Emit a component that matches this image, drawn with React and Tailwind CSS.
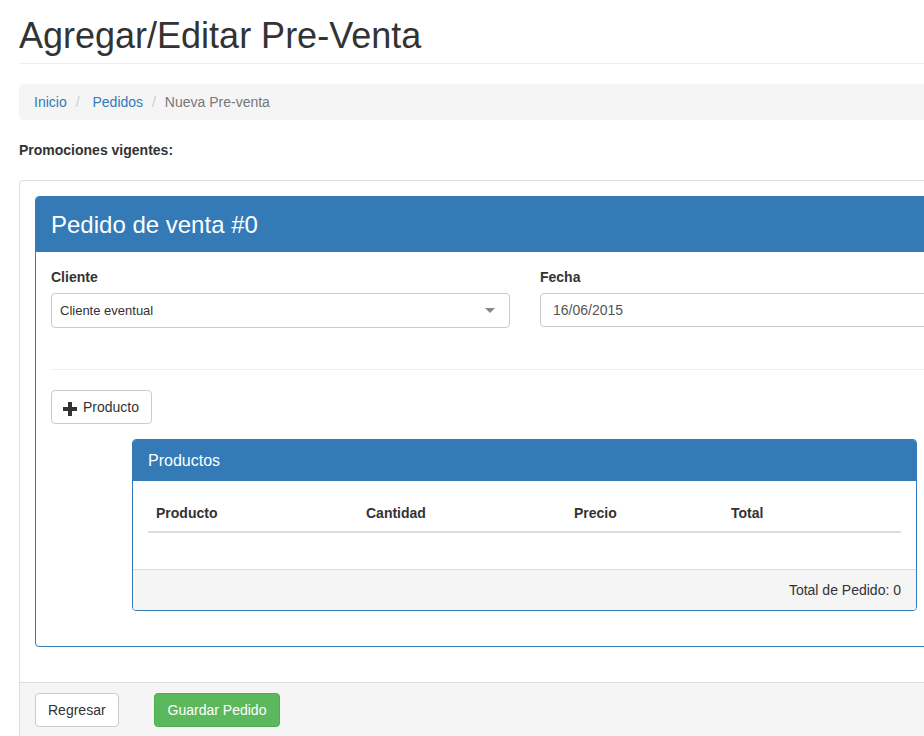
export default function App() {
  return (
    <div className="w-[924px] h-[736px] overflow-hidden bg-white font-['Liberation_Sans',Arial,sans-serif] text-[14px] leading-[20px] text-[#333]">
      <div className="pl-[19px] w-[1050px]">
        <div className="pt-[16px] pb-[7px] border-b border-[#eee]">
          <h1 className="text-[36px] leading-[40px] text-[#333]">Agregar/Editar Pre-Venta</h1>
        </div>
        <div className="mt-[20px] h-[36px] bg-[#f5f5f5] rounded-[4px] px-[15px] flex items-center">
          <span className="text-[#337ab7]">Inicio</span>
          <span className="text-[#ccc] ml-[4px] pl-[5px] pr-[9px]">/{"\u00a0"}</span>
          <span className="text-[#337ab7]">Pedidos</span>
          <span className="text-[#ccc] ml-[4px] px-[5px]">/{"\u00a0"}</span>
          <span className="text-[#777]">Nueva Pre-venta</span>
        </div>
        <div className="mt-[20px] font-bold h-[20px]">Promociones vigentes:</div>
        <div className="mt-[20px] border border-[#ddd] rounded-[4px]">
          <div className="p-[15px]">
            <div className="border border-[#337ab7] rounded-[4px] mb-[20px]">
              <div className="h-[55px] bg-[#337ab7] rounded-t-[3px] px-[15px] flex items-center text-white text-[24px]">
                Pedido de venta #0
              </div>
              <div className="p-[15px]">
                <div className="flex gap-[30px]">
                  <div className="w-[459px]">
                    <div className="font-bold h-[20px] mb-[6px]">Cliente</div>
                    <div className="h-[35px] border border-[#ccc] rounded-[4px] flex items-center justify-between pl-[8px] pr-[14px] text-[13px]">
                      <span>Cliente eventual</span>
                      <svg width="10" height="6" viewBox="0 0 10 6"><path d="M0 0 L10 0 L5 5 Z" fill="#888" /></svg>
                    </div>
                  </div>
                  <div className="w-[459px]">
                    <div className="font-bold h-[20px] mb-[6px]">Fecha</div>
                    <div className="h-[34px] border border-[#ccc] rounded-[4px] flex items-center px-[12px] text-[#555]">
                      16/06/2015
                    </div>
                  </div>
                </div>
                <div className="mt-[41px] border-t border-[#eee]" />
                <div className="mt-[20px]">
                  <button className="h-[34px] border border-[#ccc] rounded-[4px] pl-[11px] pr-[12px] flex items-center bg-white text-[#333]">
                    <svg width="14" height="14" viewBox="0 0 14 14" className="mr-[6px] mt-[3px]">
                      <rect x="5" y="0" width="4" height="14" fill="#333" />
                      <rect x="0" y="5" width="14" height="4" fill="#333" />
                    </svg>
                    Producto
                  </button>
                </div>
                <div className="mt-[15px] ml-[81px] w-[785px] border border-[#337ab7] rounded-[4px] mb-[20px]">
                  <div className="h-[41px] bg-[#337ab7] rounded-t-[3px] px-[15px] flex items-center text-white text-[16px]">
                    Productos
                  </div>
                  <div className="px-[15px] pt-[14px] pb-[15px]">
                    <div className="flex font-bold border-b-2 border-[#ddd] mb-[21px]">
                      <div className="w-[210px] p-[8px]">Producto</div>
                      <div className="w-[208px] p-[8px]">Cantidad</div>
                      <div className="w-[157px] p-[8px]">Precio</div>
                      <div className="w-[178px] p-[8px]">Total</div>
                    </div>
                  </div>
                  <div className="border-t border-[#ddd] bg-[#f5f5f5] px-[15px] py-[10px] text-right rounded-b-[3px]">
                    Total de Pedido: 0
                  </div>
                </div>
              </div>
            </div>
          </div>
          <div className="border-t border-[#ddd] bg-[#f5f5f5] px-[15px] py-[10px] h-[80px] flex items-start">
            <button className="h-[34px] border border-[#ccc] rounded-[4px] px-[12px] bg-white text-[#333]">Regresar</button>
            <button className="ml-[35px] h-[34px] border border-[#4cae4c] rounded-[4px] px-[13px] bg-[#5cb85c] text-white">Guardar Pedido</button>
          </div>
        </div>
      </div>
    </div>
  );
}
